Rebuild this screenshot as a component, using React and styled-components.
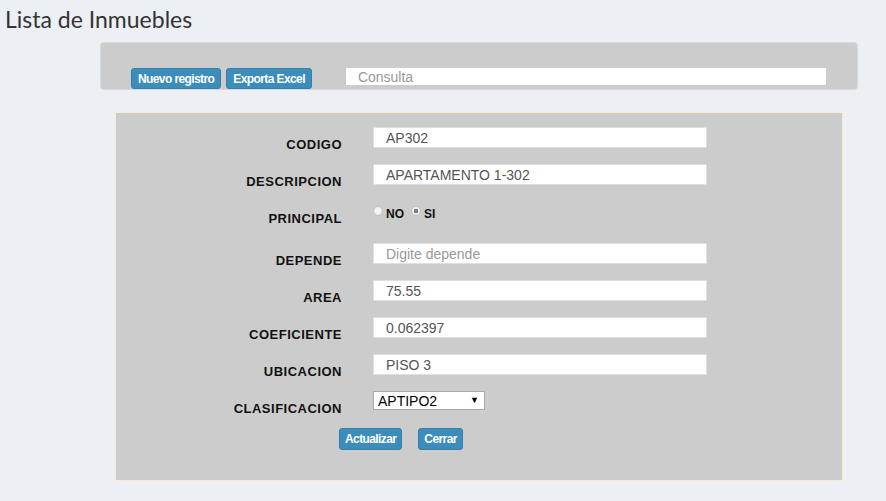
import styled, { createGlobalStyle } from 'styled-components';

const GlobalStyle = createGlobalStyle`
	html, body {
		margin: 0;
		background: #ecf0f5;
		font-family: "Liberation Sans", Arial, sans-serif;
	}
`;

const Page = styled.div`
	width: 886px;
	min-height: 501px;
	background: #ecf0f5;
`;

const Title = styled.h1`
	margin: 0;
	padding: 5px 0 0 5px;
	height: 42px;
	box-sizing: border-box;
	font-family: Lato, "Open Sans", sans-serif;
	font-weight: 400;
	font-size: 23px;
	line-height: 28px;
	color: #333;
`;

const Toolbar = styled.div`
	margin-left: 100px;
	width: 758px;
	height: 48px;
	box-sizing: border-box;
	padding: 25px 0 0 30px;
	background: #cccccc;
	border: 1px solid #d6d8dc;
	border-radius: 4px;
	display: flex;
	align-items: flex-start;
	gap: 5px;
`;

const Button = styled.button`
	height: ${({ $h }) => $h || 21}px;
	padding: 0 ${({ $pad }) => $pad ?? 6}px;
	background: #3c8dbc;
	border: 1px solid #367fa9;
	border-radius: 3px;
	color: #fff;
	font-family: "Liberation Sans", Arial, sans-serif;
	font-weight: bold;
	font-size: 12px;
	letter-spacing: -0.6px;
	cursor: pointer;
`;

const Search = styled.input`
	margin-left: 29px;
	width: 480px;
	height: 17px;
	box-sizing: border-box;
	padding: 0 12px;
	border: none;
	background: #fff;
	font-family: "Liberation Sans", Arial, sans-serif;
	font-size: 14px;
	line-height: 13px;
	color: #555;
	&::placeholder {
		color: #999;
	}
`;

const FormPanel = styled.div`
	margin: 22px 0 0 115px;
	width: 728px;
	height: 369px;
	box-sizing: border-box;
	padding-top: 14px;
	background: #cccccc;
	border: 1px solid #faebcc;
`;

const Row = styled.div`
	display: grid;
	grid-template-columns: 226px 334px;
	column-gap: 31px;
	height: ${({ $h }) => $h || 37}px;
`;

const Label = styled.div`
	padding-top: 10px;
	text-align: right;
	font-weight: bold;
	font-size: 13px;
	line-height: 15px;
	letter-spacing: 0.5px;
	color: #111;
`;

const Field = styled.input`
	width: 334px;
	height: 21px;
	box-sizing: border-box;
	padding: 0 12px;
	border: 1px solid #dcdfe6;
	background: #fff;
	font-family: "Liberation Sans", Arial, sans-serif;
	font-size: 14px;
	color: #555;
	outline: none;
	&::placeholder {
		color: #999;
	}
`;

const RadioGroup = styled.div`
	display: flex;
	align-items: flex-start;
	padding-top: 5px;
	height: 16px;
	font-weight: bold;
	font-size: 12px;
	line-height: 14px;
	color: #111;
`;

const Radio = styled.input`
	appearance: none;
	margin: 0 3px 0 0;
	width: 10px;
	height: 10px;
	border-radius: 50%;
	border: 1px solid #c4c4c4;
	background: radial-gradient(circle, #fbfbfb 0%, #e4e4e4 100%);
	&:checked {
		background: radial-gradient(circle, #7a7a7a 0 2px, #f2f2f2 2.6px, #e0e0e0 100%);
	}
`;

const RadioText = styled.span`
	margin-right: 7px;
	padding-top: 1px;
`;

const SelectWrap = styled.div`
	position: relative;
	width: 112px;
	height: 19px;
`;

const Select = styled.select`
	appearance: none;
	width: 112px;
	height: 19px;
	box-sizing: border-box;
	padding: 0 0 0 4px;
	border: 1px solid #a9a9a9;
	border-radius: 0;
	background: #fff;
	font-family: "Liberation Sans", Arial, sans-serif;
	font-size: 14px;
	color: #000;
`;

const Arrow = styled.span`
	position: absolute;
	right: 6px;
	top: 4px;
	font-size: 9px;
	color: #000;
	pointer-events: none;
`;

const Actions = styled.div`
	display: flex;
	gap: 16px;
	padding-left: 223px;
`;

const fields = [
	{ label: 'CODIGO', value: 'AP302' },
	{ label: 'DESCRIPCION', value: 'APARTAMENTO 1-302' },
	{ label: 'PRINCIPAL', radio: true },
	{ label: 'DEPENDE', placeholder: 'Digite depende' },
	{ label: 'AREA', value: '75.55' },
	{ label: 'COEFICIENTE', value: '0.062397' },
	{ label: 'UBICACION', value: 'PISO 3' },
];

const App = () => (
	<Page>
		<GlobalStyle />
		<Title>Lista de Inmuebles</Title>
		<Toolbar>
			<Button>Nuevo registro</Button>
			<Button>Exporta Excel</Button>
			<Search placeholder="Consulta" />
		</Toolbar>
		<FormPanel>
			{fields.map((f) => (
				<Row key={f.label} $h={f.radio ? 42 : 37}>
					<Label>{f.label}</Label>
					{f.radio ? (
						<RadioGroup>
							<Radio type="radio" name="principal" />
							<RadioText>NO</RadioText>
							<Radio type="radio" name="principal" defaultChecked />
							<RadioText>SI</RadioText>
						</RadioGroup>
					) : (
						<Field defaultValue={f.value} placeholder={f.placeholder} />
					)}
				</Row>
			))}
			<Row>
				<Label>CLASIFICACION</Label>
				<SelectWrap>
					<Select defaultValue="APTIPO2">
						<option>APTIPO1</option>
						<option>APTIPO2</option>
					</Select>
					<Arrow>▼</Arrow>
				</SelectWrap>
			</Row>
			<Actions>
				<Button $h={22} $pad={5}>Actualizar</Button>
				<Button $h={22} $pad={5}>Cerrar</Button>
			</Actions>
		</FormPanel>
	</Page>
);

export default App;
